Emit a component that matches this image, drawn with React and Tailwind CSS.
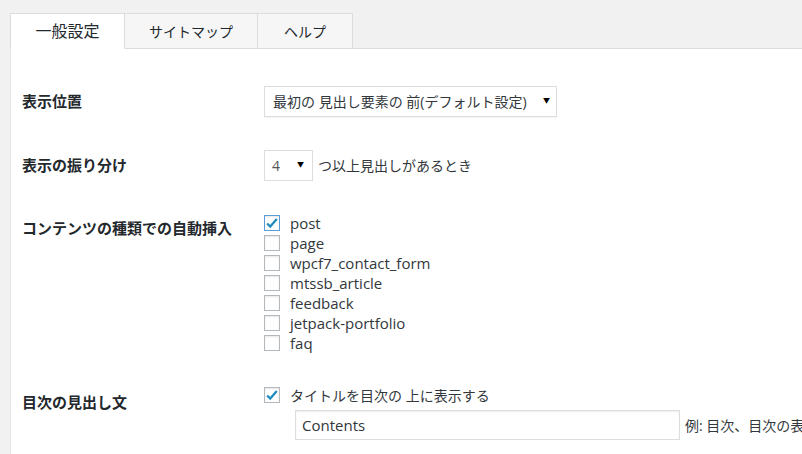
import React from "react";

const types = [
  { name: "post", checked: true, focus: true },
  { name: "page" },
  { name: "wpcf7_contact_form" },
  { name: "mtssb_article" },
  { name: "feedback" },
  { name: "jetpack-portfolio" },
  { name: "faq" },
];

function Check({ checked, focus }) {
  return (
    <span
      className={
        "w-[16px] h-[16px] shrink-0 bg-white border flex items-center justify-center shadow-[inset_0_1px_2px_rgba(0,0,0,0.1)] " +
        (focus ? "border-[#5b9dd9]" : "border-[#b4b9be]")
      }
    >
      {checked && (
        <svg width="14" height="14" viewBox="0 0 16 16">
          <path d="M2.5 8.5 L6 12 L13.5 3.5" fill="none" stroke="#1e8cbe" strokeWidth="2.6" />
        </svg>
      )}
    </span>
  );
}

export default function App() {
  return (
    <div
      className="w-[802px] h-[454px] overflow-hidden bg-[#f1f1f1] pl-[10px] text-[#32373c]"
      style={{ fontFamily: '"Open Sans", "Noto Sans CJK JP", sans-serif' }}
    >
      {/* tabs */}
      <div className="flex items-end pt-[13px] border-b border-[#dcdcdc] w-[900px]">
        <div className="w-[115px] h-[36px] -mb-px bg-white border border-[#dcdcdc] border-b-white flex items-center justify-center text-[16px] text-[#23282d]">
          一般設定
        </div>
        <div className="w-[133px] h-[35px] bg-[#f6f6f6] border-t border-r border-[#dcdcdc] flex items-center justify-center text-[14px] text-[#23282d]">
          サイトマップ
        </div>
        <div className="w-[95px] h-[35px] bg-[#f6f6f6] border-t border-r border-[#dcdcdc] flex items-center justify-center text-[14px] text-[#23282d]">
          ヘルプ
        </div>
      </div>

      {/* panel */}
      <div className="bg-white border-l border-[#e5e5e5] h-[406px] pl-[11px] text-[14px]">
        {/* row 1 */}
        <div className="flex items-center pt-[37px]">
          <div className="w-[242px] shrink-0 font-bold text-[15px] text-[#23282d]">表示位置</div>
          <div className="w-[293px] h-[31px] border border-[#dddddd] shadow-[0_1px_1px_rgba(0,0,0,0.04)] flex items-center pl-[8px] pr-[6px] text-[14px] text-[#32373c]">
            <span className="flex-1">最初の 見出し要素の 前(デフォルト設定)</span>
            <span className="text-[7px] text-black">▼</span>
          </div>
        </div>

        {/* row 2 */}
        <div className="flex items-center pt-[33px]">
          <div className="w-[242px] shrink-0 font-bold text-[15px] text-[#23282d]">表示の振り分け</div>
          <div className="w-[49px] h-[31px] border border-[#dddddd] flex items-center pl-[7px] pr-[8px] text-[14px]">
            <span className="flex-1 text-[#555]">4</span>
            <span className="text-[7px] text-black">▼</span>
          </div>
          <span className="ml-[5px]">つ以上見出しがあるとき</span>
        </div>

        {/* row 3 */}
        <div className="flex items-start pt-[32px]">
          <div className="w-[242px] shrink-0 mt-[5px] leading-[20px] font-bold text-[15px] text-[#23282d]">
            コンテンツの種類での自動挿入
          </div>
          <div className="flex flex-col">
            {types.map((t) => (
              <label key={t.name} className="flex items-center h-[20px] gap-[10px] text-[15px] text-[#32373c]">
                <Check checked={t.checked} focus={t.focus} />
                <span>{t.name}</span>
              </label>
            ))}
          </div>
        </div>

        {/* row 4 */}
        <div className="flex items-start pt-[32px]">
          <div className="w-[242px] shrink-0 mt-[7px] leading-[20px] font-bold text-[15px] text-[#23282d]">
            目次の見出し文
          </div>
          <div className="flex flex-col">
            <label className="flex items-center h-[20px] gap-[10px] text-[14px]">
              <Check checked />
              <span>タイトルを目次の 上に表示する</span>
            </label>
            <div className="flex items-center mt-[5px] whitespace-nowrap">
              <div className="ml-[31px] w-[385px] shrink-0 h-[30px] border border-[#dddddd] shadow-[inset_0_1px_2px_rgba(0,0,0,0.07)] flex items-center pl-[6px] text-[15px] text-[#32373c]">
                Contents
              </div>
              <span className="ml-[5px] text-[14px]">例: 目次、目次の表示</span>
            </div>
          </div>
        </div>
      </div>
    </div>
  );
}
